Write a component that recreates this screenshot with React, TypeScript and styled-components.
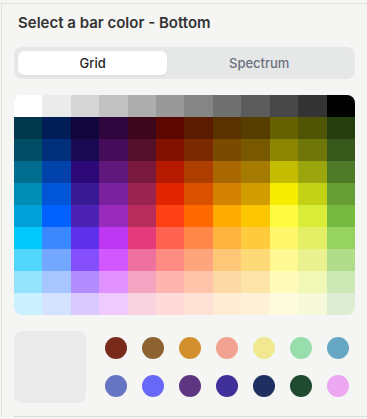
import React, { useState } from "react";
import styled, { createGlobalStyle } from "styled-components";

const Global = createGlobalStyle`
  html, body { margin: 0; padding: 0; background: #f5f5f3; }
  body { font-family: Inter, "Noto Sans", sans-serif; width: 367px; height: 419px; overflow: hidden; }
`;

const Panel = styled.div`
  margin: 3px 0 0 1px;
  border-top: 1px solid #e0e0de;
  border-left: 1px solid #e0e0de;
  padding: 9px 12px 0 12px;
  display: flex;
  flex-direction: column;
`;

const Title = styled.h2`
  margin: 0 0 14px 4px;
  font-size: 15px;
  line-height: 20px;
  font-weight: 600;
  color: #333333;
`;

const Tabs = styled.div`
  display: flex;
  padding: 4px;
  height: 24px;
  background: #e6e7e7;
  border-radius: 8px;
  margin-bottom: 16px;
`;

const Tab = styled.button<{ $active: boolean }>`
  flex: 1 1 auto;
  border: none;
  border-radius: 6px;
  padding: 0;
  font-family: Inter, "Noto Sans", sans-serif;
  font-size: 13px;
  font-weight: 500;
  background: ${(p) => (p.$active ? "#ffffff" : "transparent")};
  color: ${(p) => (p.$active ? "#1f1f1f" : "#6c7080")};
  box-shadow: ${(p) => (p.$active ? "0 1px 2px rgba(0,0,0,0.06)" : "none")};
  cursor: pointer;
`;

const ColorGrid = styled.div`
  display: grid;
  grid-template-columns: repeat(12, 1fr);
  grid-auto-rows: 22px;
  border-radius: 8px;
  overflow: hidden;
  margin-bottom: 16px;
`;

const Cell = styled.div<{ $c: string }>`
  background: ${(p) => p.$c};
`;

const Bottom = styled.div`
  display: flex;
  align-items: center;
  gap: 19px;
  height: 72px;
`;

const Preview = styled.div`
  width: 72px;
  height: 72px;
  border-radius: 8px;
  background: #ebebeb;
`;

const Swatches = styled.div`
  display: grid;
  grid-template-columns: repeat(7, 22px);
  column-gap: 15px;
  row-gap: 16px;
`;

const Swatch = styled.div<{ $c: string }>`
  width: 22px;
  height: 22px;
  border-radius: 50%;
  background: ${(p) => p.$c};
`;

const Divider = styled.div`
  margin: 13px -12px 0 0;
  border-top: 1px solid #dcdcdc;
`;

const rows: string[][] = [
  ["#FFFFFF", "#EBEBEB", "#D6D6D6", "#C2C2C2", "#ADADAD", "#999999", "#858585", "#707070", "#5C5C5C", "#474747", "#333333", "#000000"],
  ["#00374A", "#011D57", "#11053B", "#2E063D", "#3C071B", "#5C0701", "#5A1C00", "#583300", "#563D00", "#666100", "#4F5504", "#263E0F"],
  ["#004D65", "#012F7B", "#1A0A52", "#450D59", "#551029", "#831100", "#7B2900", "#7A4A00", "#785800", "#8D8602", "#6F760A", "#38571A"],
  ["#016E8F", "#0042A9", "#2C0977", "#61187C", "#791A3D", "#B51A00", "#AD3E00", "#A96800", "#A67B01", "#C4BC00", "#9BA50E", "#4E7A27"],
  ["#008CB4", "#0056D6", "#371A94", "#7A219E", "#99244F", "#E22400", "#DA5100", "#D38301", "#D19D01", "#F5EC00", "#C3D117", "#669D34"],
  ["#00A1D8", "#0061FE", "#4D22B2", "#982ABC", "#B92D5D", "#FF4015", "#FF6A00", "#FFAB01", "#FCC700", "#FEFB41", "#D9EC37", "#76BB40"],
  ["#01C7FC", "#3A87FE", "#5E30EB", "#BE38F3", "#E63B7A", "#FE6250", "#FE8648", "#FEB43F", "#FECB3E", "#FFF76B", "#E4EF65", "#96D35F"],
  ["#52D6FC", "#74A7FF", "#864FFE", "#D357FE", "#EE719E", "#FF8C82", "#FEA57D", "#FEC777", "#FED977", "#FFF994", "#EAF28F", "#B1DD8B"],
  ["#93E3FC", "#A7C6FF", "#B18CFE", "#E292FE", "#F4A4C0", "#FFB5AF", "#FFC5AB", "#FED9A8", "#FDE4A8", "#FFFBB9", "#F1F7B7", "#CDE8B5"],
  ["#CBF0FF", "#D3E2FF", "#D9C9FE", "#EFCAFE", "#F9D3E0", "#FFDAD8", "#FFE2D6", "#FEECD4", "#FEF1D5", "#FDFBDD", "#F6FADB", "#DEEED4"],
];

const swatches = [
  "#7a2a1a", "#8b6230", "#d4902f", "#f2a291", "#f0e991", "#98deac", "#66a8c4",
  "#6674c4", "#6868f8", "#5e3580", "#40309a", "#1e2f60", "#1f4a30", "#eda6f2",
];

export default function App() {
  const [tab, setTab] = useState("Grid");
  return (
    <>
      <Global />
      <Panel>
        <Title>Select a bar color - Bottom</Title>
        <Tabs>
          {["Grid", "Spectrum"].map((t) => (
            <Tab key={t} $active={tab === t} onClick={() => setTab(t)}>
              {t}
            </Tab>
          ))}
        </Tabs>
        <ColorGrid>
          {rows.flat().map((c, i) => (
            <Cell key={i} $c={c} />
          ))}
        </ColorGrid>
        <Bottom>
          <Preview />
          <Swatches>
            {swatches.map((c) => (
              <Swatch key={c} $c={c} />
            ))}
          </Swatches>
        </Bottom>
        <Divider />
      </Panel>
    </>
  );
}
